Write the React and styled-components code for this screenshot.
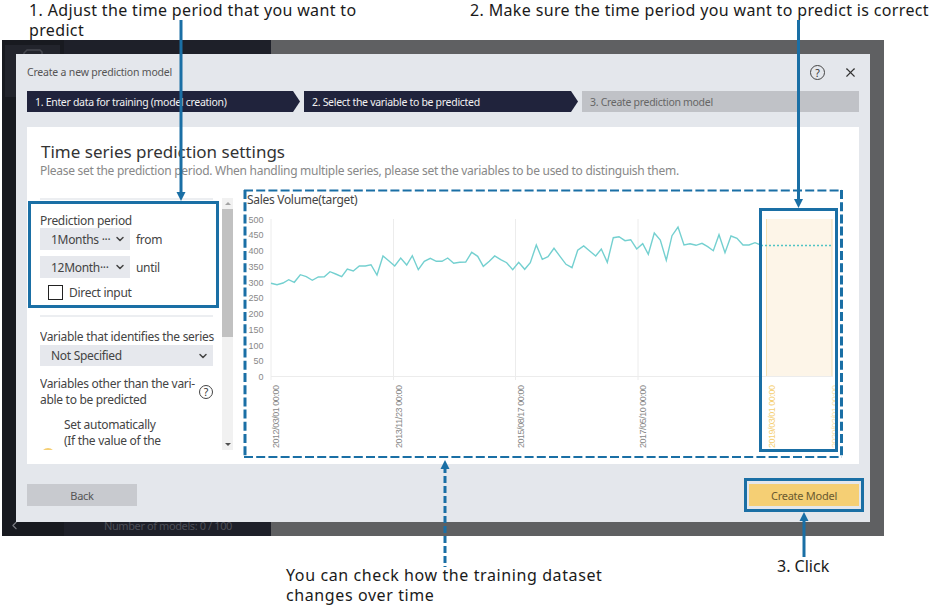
import React from 'react';
import styled, { createGlobalStyle } from 'styled-components';
import { ChevronDown, ChevronLeft, X } from 'lucide-react';

const Global = createGlobalStyle`
  html, body { margin: 0; padding: 0; background: #fff; }
  #root { width: 932px; height: 606px; }
`;
const UI = `"Noto Sans", "Open Sans", sans-serif`;
const BLUE = '#1a6fa5';

const Page = styled.div`
  position: relative; width: 932px; height: 606px; overflow: hidden; background: #fff;
  font-family: ${UI}; display: flex; flex-direction: column;
`;
const NotesTop = styled.div`
  height: 40px; display: flex; justify-content: space-between; padding: 0 3px 0 29px; box-sizing: border-box;
`;
const Note = styled.div`
  font-size: 16px; line-height: 20px; color: #1a1a1a; letter-spacing: ${p => p.$ls || '0.35px'};
  width: ${p => p.$w || 'auto'}; white-space: pre-line;
`;
const Backdrop = styled.div`
  position: relative; margin-left: 2px; width: 882px; height: 496px; background: #5f6062; display: flex;
`;
const Rail = styled.div`
  width: 62px; background: #181a20; display: flex; flex-direction: column; justify-content: space-between;
  padding: 5px 0 0 3px; box-sizing: border-box;
`;
const RailTile = styled.div`width: 55px; height: 52px; background: #22242c; display: flex; justify-content: center; padding-top: 4px; box-sizing: border-box; color: #45474f;`;
const RailBack = styled.div`color: #7a7c82; height: 22px; display: flex; align-items: center; padding-left: 3px;`;
const Sidebar = styled.div`
  width: 207px; background: #1e2029; color: #4d4f58; font-size: 11px; letter-spacing: -0.4px; display: flex; align-items: flex-end;
  padding: 0 0 0 40px; box-sizing: border-box; line-height: 20px;
`;
const Modal = styled.div`
  position: absolute; left: 14px; top: 14px; width: 854px; height: 468px; background: #e4e7ec;
  padding: 0 11px; box-sizing: border-box; display: flex; flex-direction: column;
`;
const Header = styled.div`
  height: 37px; padding-bottom: 2px; box-sizing: border-box; display: flex; align-items: center; justify-content: space-between;
  font-size: 10.5px; letter-spacing: -0.2px; color: #555;
`;
const HeaderTools = styled.div`display: flex; align-items: center; gap: 18px; padding: 2px 1px 0 0; color: #333;`;
const Help = styled.span`
  width: ${p => p.$s || 14}px; height: ${p => p.$s || 14}px; border: 1px solid #444; border-radius: 50%; box-sizing: border-box;
  display: inline-flex; align-items: center; justify-content: center; font-size: 10.5px; letter-spacing: 0; color: #333; flex: none;
`;
const Steps = styled.div`display: flex; gap: 4px; height: 21px;`;
const Step = styled.div`
  width: ${p => p.$w}px; height: 21px; box-sizing: border-box; padding-left: 8px; display: flex; align-items: center;
  font-size: 10.5px; letter-spacing: -0.3px; white-space: nowrap;
  background: ${p => p.$off ? '#c0c2c7' : '#20233c'}; color: ${p => p.$off ? '#666' : '#f2f2f2'};
  clip-path: ${p => p.$off ? 'none' : 'polygon(0 0, calc(100% - 7px) 0, 100% 50%, calc(100% - 7px) 100%, 0 100%)'};
`;
const Card = styled.div`
  margin-top: 15px; height: 337px; background: #fff; padding: 15px 0 0 13px; box-sizing: border-box;
  display: flex; flex-direction: column;
`;
const Title = styled.h1`margin: 0 0 1px 1px; font-weight: 400; font-size: 17px; line-height: 20px; color: #333;`;
const Sub = styled.p`margin: 0; font-size: 12px; letter-spacing: -0.28px; line-height: 16px; color: #888; white-space: nowrap;`;
const Row = styled.div`display: flex; gap: 11px; margin-top: 11px;`;
const Panel = styled.div`display: flex; width: 193px; height: 252px; margin-top: 8px; letter-spacing: -0.3px;`;
const Scroller = styled.div`width: 182px; height: 252px; overflow: hidden; padding-right: 9px; box-sizing: border-box;`;
const Sep = styled.div`height: 2px; background: #eceef1; margin-top: ${p => p.$mt || 0}px;`;
const Label = styled.div`font-size: 12px; line-height: 16px; color: #444; white-space: nowrap; margin-top: ${p => p.$mt || 0}px;`;
const SelectRow = styled.div`display: flex; align-items: center; gap: 6px; margin-top: ${p => p.$mt || 0}px; font-size: 12px; color: #444;`;
const Select = styled.div`
  width: ${p => p.$w}px; height: ${p => p.$h || 22}px; background: #e6e8ed; display: flex; align-items: center; justify-content: space-between;
  box-sizing: border-box; padding: 0 4px 0 11px; font-size: 12px; color: #444; white-space: nowrap; flex: none;
`;
const Check = styled.div`display: flex; align-items: center; gap: 6px; margin: 7px 0 0 8px; font-size: 12px; color: #444; line-height: 15px;`;
const Box = styled.span`width: 15px; height: 15px; border: 1.5px solid #222; box-sizing: border-box; background: #fff; flex: none;`;
const HelpRow = styled.div`display: flex; align-items: center; justify-content: space-between; margin-top: 10px;`;
const Option = styled.div`display: flex; align-items: center; gap: 9px; margin: 9px 0 0 1px; min-height: 76px; font-size: 12px; line-height: 16px; color: #444;`;
const OptionText = styled.div`align-self: flex-start;`;
const Dot = styled.span`width: 14px; height: 14px; border-radius: 50%; background: #f5cf74; flex: none;`;
const Scrollbar = styled.div`
  width: 11px; height: 252px; background: #f1f1f1; display: flex; flex-direction: column; align-items: center;
`;
const ScrollArrow = styled.span`
  width: 0; height: 0; margin: 4px 0; border-left: 3px solid transparent; border-right: 3px solid transparent;
  ${p => p.$up ? 'border-bottom: 3px solid #a3a3a3;' : 'border-top: 3px solid #505050;'}
`;
const Thumb = styled.div`width: 100%; height: 128px; background: #c1c1c1; margin-bottom: auto;`;
const ChartBox = styled.div`width: 598px; height: 268px; display: flex; flex-direction: column;`;
const ChartTitle = styled.div`font-size: 12px; letter-spacing: -0.3px; line-height: 17px; color: #444; padding: 1px 0 0 3px; white-space: nowrap;`;
const Footer = styled.div`display: flex; justify-content: space-between; margin-top: 20px;`;
const Btn = styled.div`
  width: 110px; height: 22px; display: flex; align-items: center; justify-content: center; font-size: 11px; letter-spacing: -0.25px;
  background: ${p => p.$primary ? '#f5cf74' : '#c8cacf'}; color: ${p => p.$primary ? '#6a5a30' : '#555'};
`;
const Overlay = styled.svg`position: absolute; left: 0; top: 0; width: 932px; height: 606px; pointer-events: none;`;
const NoteAt = styled(Note)`position: absolute; left: ${p => p.$x}px; top: ${p => p.$y}px;`;

const A = [[93,295],[111,299],[129,294],[146,284],[163,292],[181,269],[199,275],[217,286],[235,276],[253,275],[270,260],[287,267],[305,275],[322,252],[340,258],[358,243],[376,243],[393,239],[411,270],[429,213],[447,228],[464,243],[482,219],[500,240],[517,212],[535,254],[553,229],[571,220],[589,229],[606,229],[623,219],[641,235],[659,232],[677,231],[695,202],[713,214],[730,244],[748,229],[764,213],[782,224],[800,233],[818,254],[836,232],[854,253],[871,233],[889,180],[907,223]].map(([x,y])=>[240+x/3,185+y/3]);
const B = [[24,215],[42,190],[60,214],[78,238],[96,248],[113,196],[131,183],[149,198],[167,213],[184,192],[202,232],[220,158],[237,155],[255,167],[272,164],[290,192],[308,176],[325,208],[343,144],[361,165],[379,226],[396,152],[414,126],[432,180],[450,176],[468,181],[486,175],[503,185],[520,197],[537,149],[555,203],[573,153],[591,160],[609,180],[627,180],[645,173],[662,180]].map(([x,y])=>[540+x/3,185+y/3]);
const pts = [...A, ...B].map(p => p.map(n => n.toFixed(1)).join(',')).join(' ');
const ticks = [500,450,400,350,300,250,200,150,100,50,0];
const grid = [[271,'2012/03/01 00:00'],[393.5,'2013/11/23 00:00'],[515.5,'2015/08/17 00:00'],[638,'2017/05/10 00:00']];

function Chart() {
  return (
    <svg width="598" height="250" viewBox="244 208 598 250" style={{ display: 'block', fontFamily: '"Liberation Sans", sans-serif' }}>
      <rect x="766" y="219" width="66" height="157" fill="#fdf5e8" />
      <line x1="766.5" x2="766.5" y1="219" y2="376" stroke="#f7e0ae" />
      <line x1="832" x2="832" y1="219" y2="376" stroke="#efdcb2" />
      <line x1="271" x2="833" y1="376.5" y2="376.5" stroke="#ececec" />
      {grid.map(([x]) => <line key={x} x1={x} x2={x} y1="219" y2="380" stroke="#ececec" />)}
      {ticks.map((t, i) => (
        <text key={t} x="263.5" y={222.5 + i * 15.75} textAnchor="end" fontSize="9" fill="#888">{t}</text>
      ))}
      {grid.map(([x, s]) => (
        <text key={s} transform={`translate(${x + 8},448) rotate(-90)`} fontSize="9" fill="#888" textLength="63">{s}</text>
      ))}
      <text transform="translate(775,448) rotate(-90)" fontSize="9" fill="#f5cf74" textLength="63">2019/03/01 00:00</text>
      <text transform="translate(838,448) rotate(-90)" fontSize="9" fill="#f8e3b0" textLength="63">2020/02/01 00:00</text>
      <polyline points={pts} fill="none" stroke="#74d0d0" strokeWidth="1.4" />
      <line x1="761" x2="831" y1="245.5" y2="245.5" stroke="#4fc4c4" strokeWidth="1.5" strokeDasharray="2 2" />
    </svg>
  );
}

function Arrow({ x, y1, y2, up, dashed }) {
  const tip = up ? y1 : y2;
  const d = up ? 9 : -9;
  return (
    <g>
      <line x1={x} x2={x} y1={up ? y1 + 6 : y1} y2={up ? y2 : y2 - 6} stroke={BLUE} strokeWidth="3" strokeDasharray={dashed ? '7 3' : undefined} />
      <polygon points={`${x},${tip} ${x - 4.5},${tip + d} ${x + 4.5},${tip + d}`} fill={BLUE} />
    </g>
  );
}

export default function App() {
  return (
    <Page>
      <Global />
      <NotesTop>
        <Note $w="350px">{'1. Adjust the time period that you want to\npredict'}</Note>
        <Note>2. Make sure the time period you want to predict is correct</Note>
      </NotesTop>
      <Backdrop>
        <Rail>
          <RailTile>
            <svg width="20" height="10" viewBox="0 0 20 10" fill="none" stroke="currentColor" strokeWidth="1.5">
              <path d="M1 10V4l3-3h13l2 2v7" />
            </svg>
          </RailTile>
          <RailBack><ChevronLeft size={13} /></RailBack>
        </Rail>
        <Sidebar>Number of models: 0 / 100</Sidebar>
        <Modal>
          <Header>
            <span>Create a new prediction model</span>
            <HeaderTools><Help $s={15}>?</Help><X size={15} strokeWidth={1.8} /></HeaderTools>
          </Header>
          <Steps>
            <Step $w={273}>1. Enter data for training (model creation)</Step>
            <Step $w={274}>2. Select the variable to be predicted</Step>
            <Step $w={277} $off>3. Create prediction model</Step>
          </Steps>
          <Card>
            <Title>Time series prediction settings</Title>
            <Sub>Please set the prediction period. When handling multiple series, please set the variables to be used to distinguish them.</Sub>
            <Row>
              <Panel>
                <Scroller>
                  <Sep />
                  <Label $mt={13}>Prediction period</Label>
                  <SelectRow $mt={-1}>
                    <Select $w={90}><span>1Months ···</span><ChevronDown size={12} strokeWidth={3} /></Select>from
                  </SelectRow>
                  <SelectRow $mt={6}>
                    <Select $w={90}><span>12Month···</span><ChevronDown size={12} strokeWidth={3} /></Select>until
                  </SelectRow>
                  <Check><Box />Direct input</Check>
                  <Sep $mt={15} />
                  <Label $mt={12}>Variable that identifies the series</Label>
                  <Select $w={173} $h={21}><span>Not Specified</span><ChevronDown size={12} strokeWidth={3} /></Select>
                  <HelpRow>
                    <Label>Variables other than the vari-<br />able to be predicted</Label>
                    <Help>?</Help>
                  </HelpRow>
                  <Option>
                    <Dot />
                    <OptionText>Set automatically<br />(If the value of the</OptionText>
                  </Option>
                </Scroller>
                <Scrollbar>
                  <ScrollArrow $up />
                  <Thumb />
                  <ScrollArrow />
                </Scrollbar>
              </Panel>
              <ChartBox>
                <ChartTitle>Sales Volume(target)</ChartTitle>
                <Chart />
              </ChartBox>
            </Row>
          </Card>
          <Footer>
            <Btn>Back</Btn>
            <Btn $primary>Create Model</Btn>
          </Footer>
        </Modal>
      </Backdrop>
      <NoteAt $x={286} $y={565} $w="340px" $ls="0.6px">{'You can check how the training dataset\nchanges over time'}</NoteAt>
      <NoteAt $x={777} $y={556} $ls="0">3. Click</NoteAt>
      <Overlay viewBox="0 0 932 606">
        <rect x="29.5" y="202.5" width="188" height="104" fill="none" stroke={BLUE} strokeWidth="3" />
        <rect x="760.5" y="209.5" width="76" height="241" fill="none" stroke={BLUE} strokeWidth="3" />
        <rect x="745.5" y="479.5" width="117" height="31" fill="none" stroke={BLUE} strokeWidth="3" />
        <g stroke={BLUE} strokeDasharray="9 3.2" fill="none">
          <line x1="244" x2="842" y1="190.5" y2="190.5" strokeWidth="2" />
          <line x1="244" x2="842" y1="457" y2="457" strokeWidth="2" />
          <line x1="245" x2="245" y1="190" y2="457" strokeWidth="3" />
          <line x1="841.5" x2="841.5" y1="190" y2="457" strokeWidth="3" />
        </g>
        <Arrow x={181} y1={20} y2={201} />
        <Arrow x={798.5} y1={20} y2={208} />
        <Arrow x={445} y1={460} y2={567} up dashed />
        <Arrow x={804} y1={512} y2={557} up />
      </Overlay>
    </Page>
  );
}
